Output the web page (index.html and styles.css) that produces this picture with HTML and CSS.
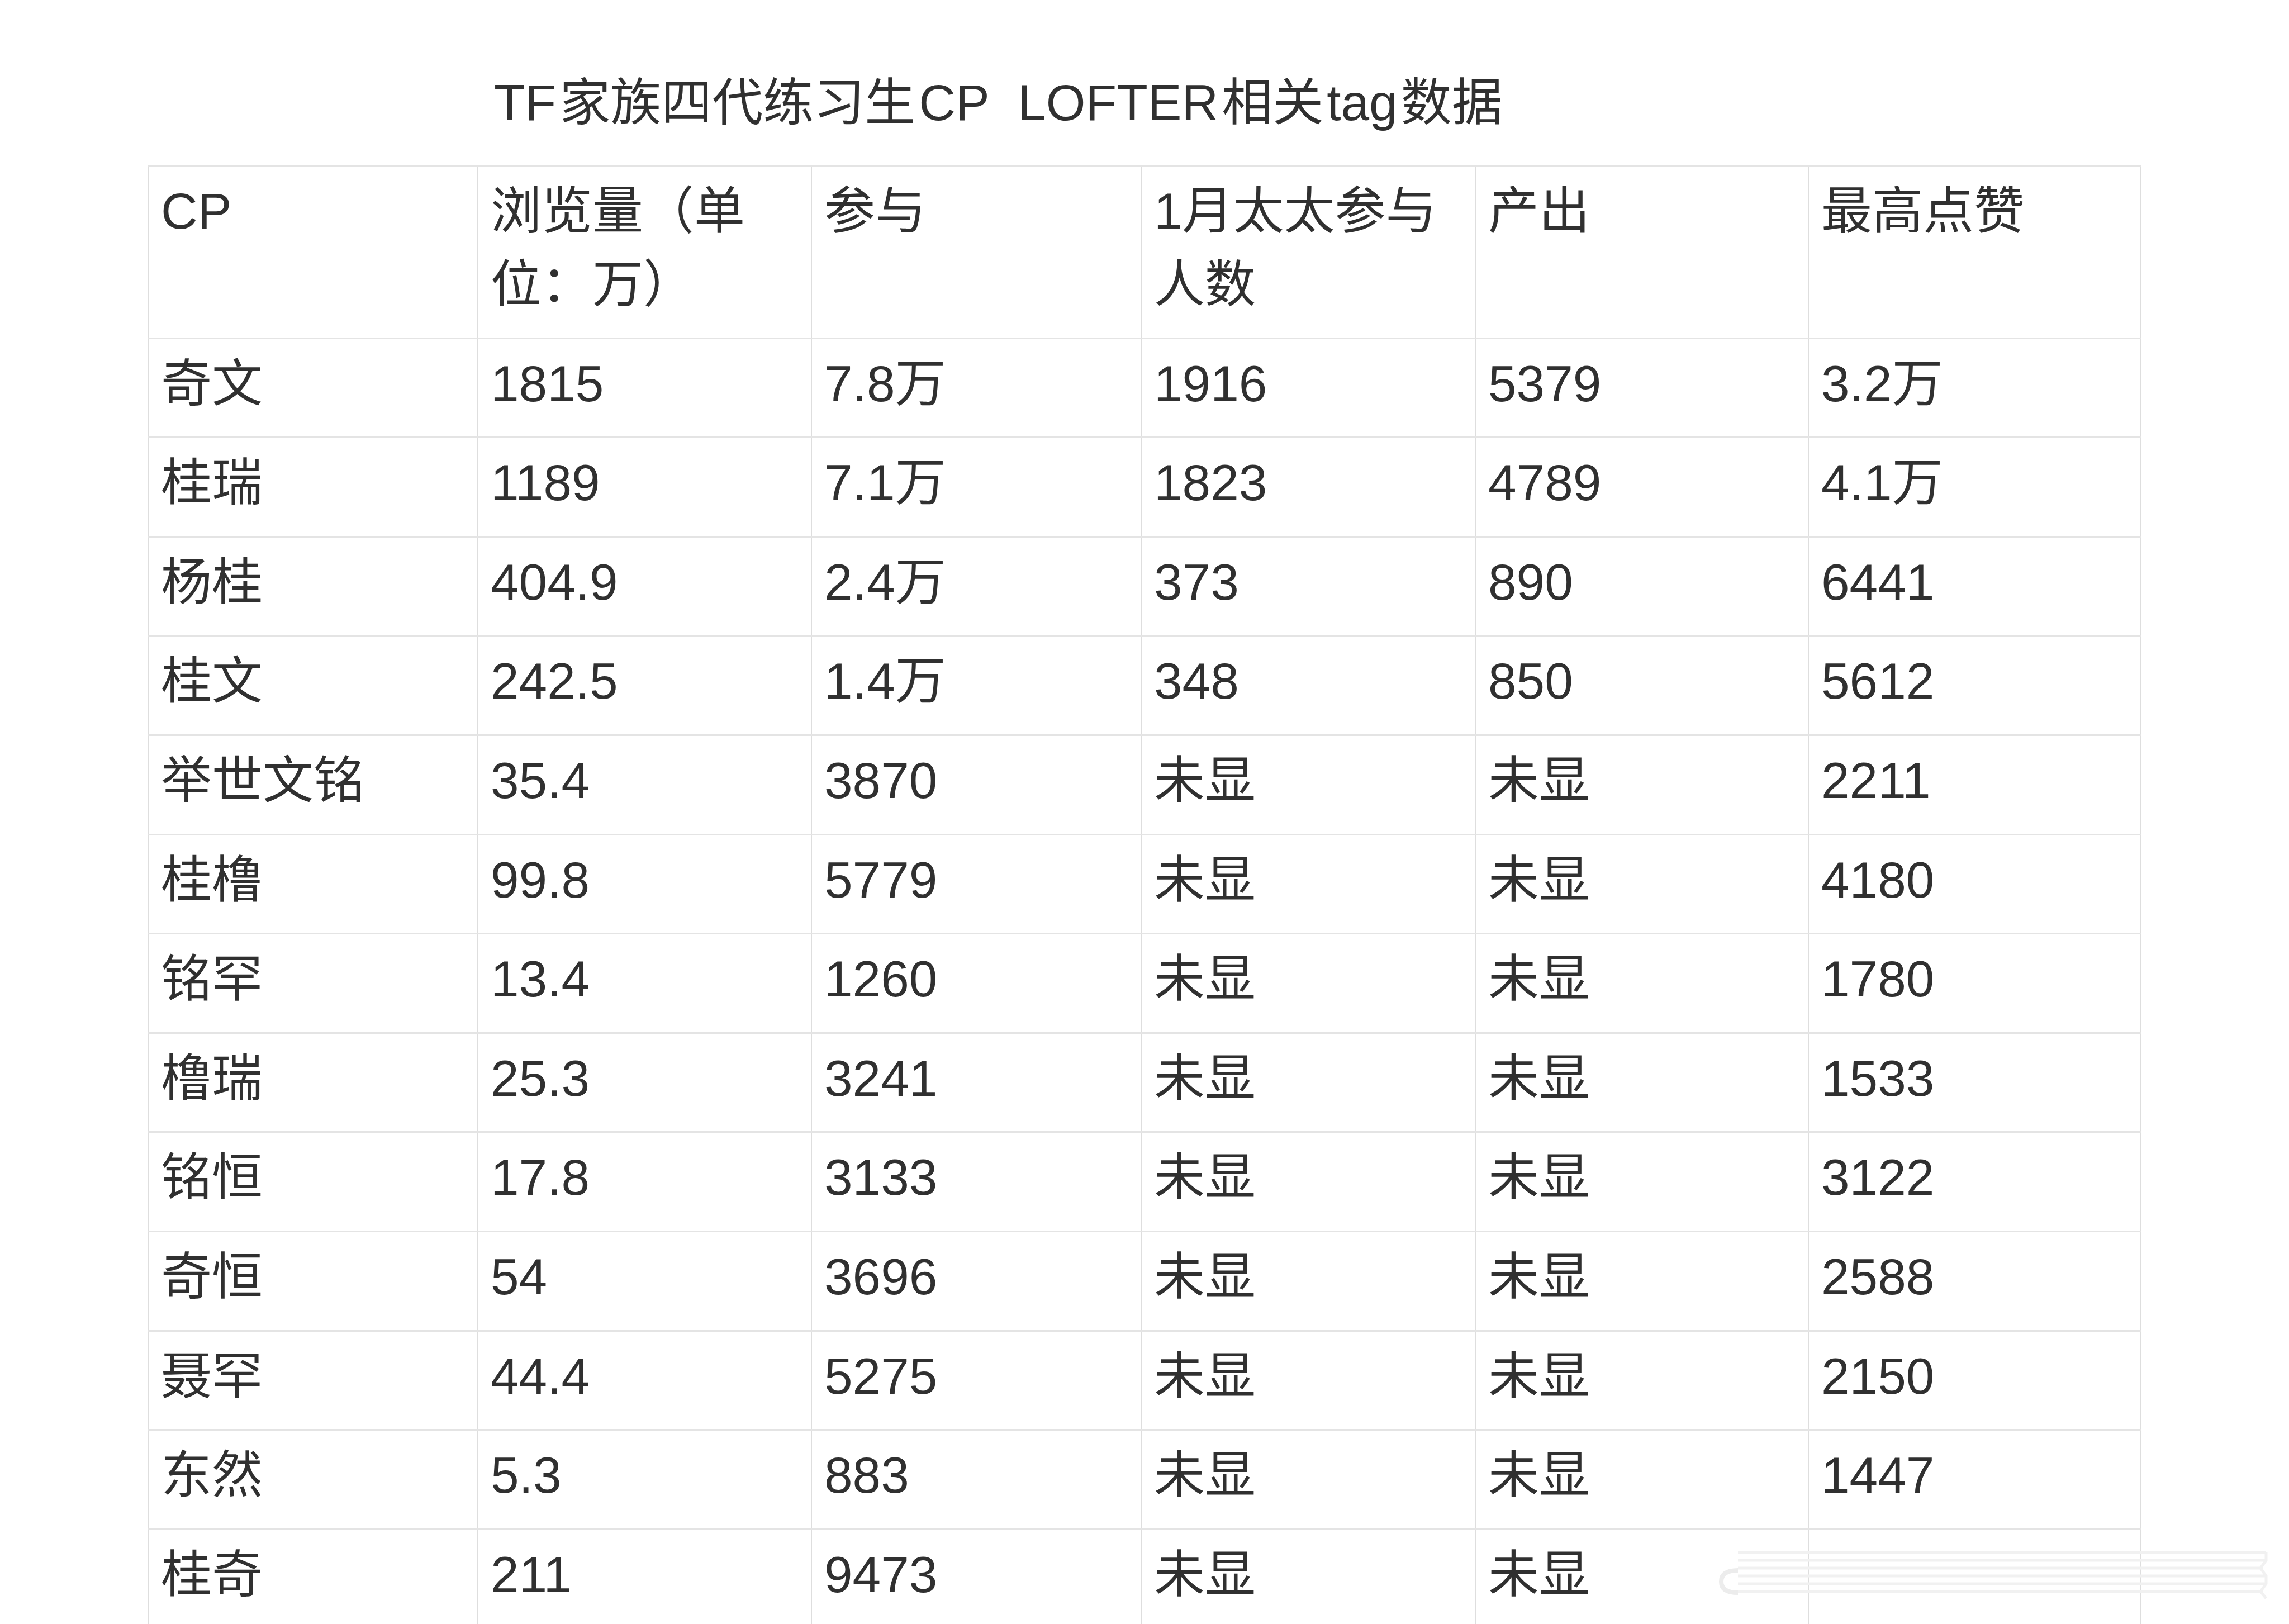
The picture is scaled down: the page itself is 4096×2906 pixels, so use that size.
FILE: index.html
```html
<!DOCTYPE html>
<html lang="zh-CN">
<head>
<meta charset="utf-8">
<title>TF家族四代练习生CP LOFTER相关tag数据</title>
<link rel="stylesheet" href="styles.css">
</head>
<body>
<main class="page">
  <h1 class="title">TF<span class="gap"></span>家族四代练习生<span class="gap"></span>CP&nbsp; LOFTER<span class="gap"></span>相关<span class="gap"></span>tag<span class="gap"></span>数据</h1>
  <table class="data">
    <colgroup>
      <col class="w1"><col class="w2"><col class="w3"><col class="w4"><col class="w5"><col class="w6">
    </colgroup>
    <thead>
      <tr class="head"><td>CP</td><td>浏览量（单位：万）</td><td>参与</td><td>1月太太参与人数</td><td>产出</td><td>最高点赞</td></tr>
    </thead>
    <tbody>
      <tr><td>奇文</td><td>1815</td><td>7.8万</td><td>1916</td><td>5379</td><td>3.2万</td></tr>
      <tr><td>桂瑞</td><td>1189</td><td>7.1万</td><td>1823</td><td>4789</td><td>4.1万</td></tr>
      <tr><td>杨桂</td><td>404.9</td><td>2.4万</td><td>373</td><td>890</td><td>6441</td></tr>
      <tr><td>桂文</td><td>242.5</td><td>1.4万</td><td>348</td><td>850</td><td>5612</td></tr>
      <tr><td>举世文铭</td><td>35.4</td><td>3870</td><td>未显</td><td>未显</td><td>2211</td></tr>
      <tr><td>桂橹</td><td>99.8</td><td>5779</td><td>未显</td><td>未显</td><td>4180</td></tr>
      <tr><td>铭罕</td><td>13.4</td><td>1260</td><td>未显</td><td>未显</td><td>1780</td></tr>
      <tr><td>橹瑞</td><td>25.3</td><td>3241</td><td>未显</td><td>未显</td><td>1533</td></tr>
      <tr><td>铭恒</td><td>17.8</td><td>3133</td><td>未显</td><td>未显</td><td>3122</td></tr>
      <tr><td>奇恒</td><td>54</td><td>3696</td><td>未显</td><td>未显</td><td>2588</td></tr>
      <tr><td>聂罕</td><td>44.4</td><td>5275</td><td>未显</td><td>未显</td><td>2150</td></tr>
      <tr><td>东然</td><td>5.3</td><td>883</td><td>未显</td><td>未显</td><td>1447</td></tr>
      <tr><td>桂奇</td><td>211</td><td>9473</td><td>未显</td><td>未显</td><td></td></tr>
    </tbody>
  </table>
  <svg class="mark" width="1000" height="100" viewBox="0 0 1000 100" aria-hidden="true">
    <path d="M40 40 Q10 40 10 60 Q10 80 40 80" fill="none" stroke="#ececec" stroke-width="8"/>
    <g stroke="#f1f1f1" stroke-width="5" fill="none">
      <line x1="40" y1="8" x2="985" y2="8"/>
      <line x1="40" y1="22" x2="985" y2="22"/>
      <line x1="40" y1="36" x2="980" y2="36"/>
      <line x1="40" y1="50" x2="985" y2="50"/>
      <line x1="40" y1="64" x2="985" y2="64"/>
      <line x1="40" y1="78" x2="980" y2="78"/>
      <path d="M985 8 L985 22 L975 36 L985 50 L985 64 L975 78 L985 90"/>
    </g>
  </svg>
</main>
</body>
</html>
```
FILE: styles.css
```css
html, body {
  margin: 0;
  padding: 0;
  background: #ffffff;
}
body {
  width: 4096px;
  height: 2906px;
  overflow: hidden;
  font-family: "Liberation Sans", "Noto Sans CJK SC", sans-serif;
  color: #303030;
}
.page {
  position: relative;
  padding: 118px 0 0 264px;
}
.title {
  margin: 0 0 46px 620px;
  font-size: 91px;
  font-weight: 400;
  line-height: 131px;
  white-space: nowrap;
  color: #303030;
}
.gap {
  display: inline-block;
  width: 6px;
}
.data {
  border-collapse: collapse;
  table-layout: fixed;
  width: 3565px;
  font-size: 91px;
  line-height: 131px;
  color: #303030;
}
.w1 { width: 590px; }
.w2 { width: 597px; }
.w3 { width: 590px; }
.w4 { width: 598px; }
.w5 { width: 596px; }
.w6 { width: 594px; }
.data td {
  vertical-align: top;
  padding: 14px 20px 29.6px 22px;
  border-top: 3px solid #e4e4e4;
  border-bottom: 3px solid #e4e4e4;
  border-left: 2px solid #dedede;
  border-right: 2px solid #dedede;
  white-space: normal;
  word-break: normal;
}
.mark {
  position: absolute;
  left: 3070px;
  top: 2770px;
}
```
